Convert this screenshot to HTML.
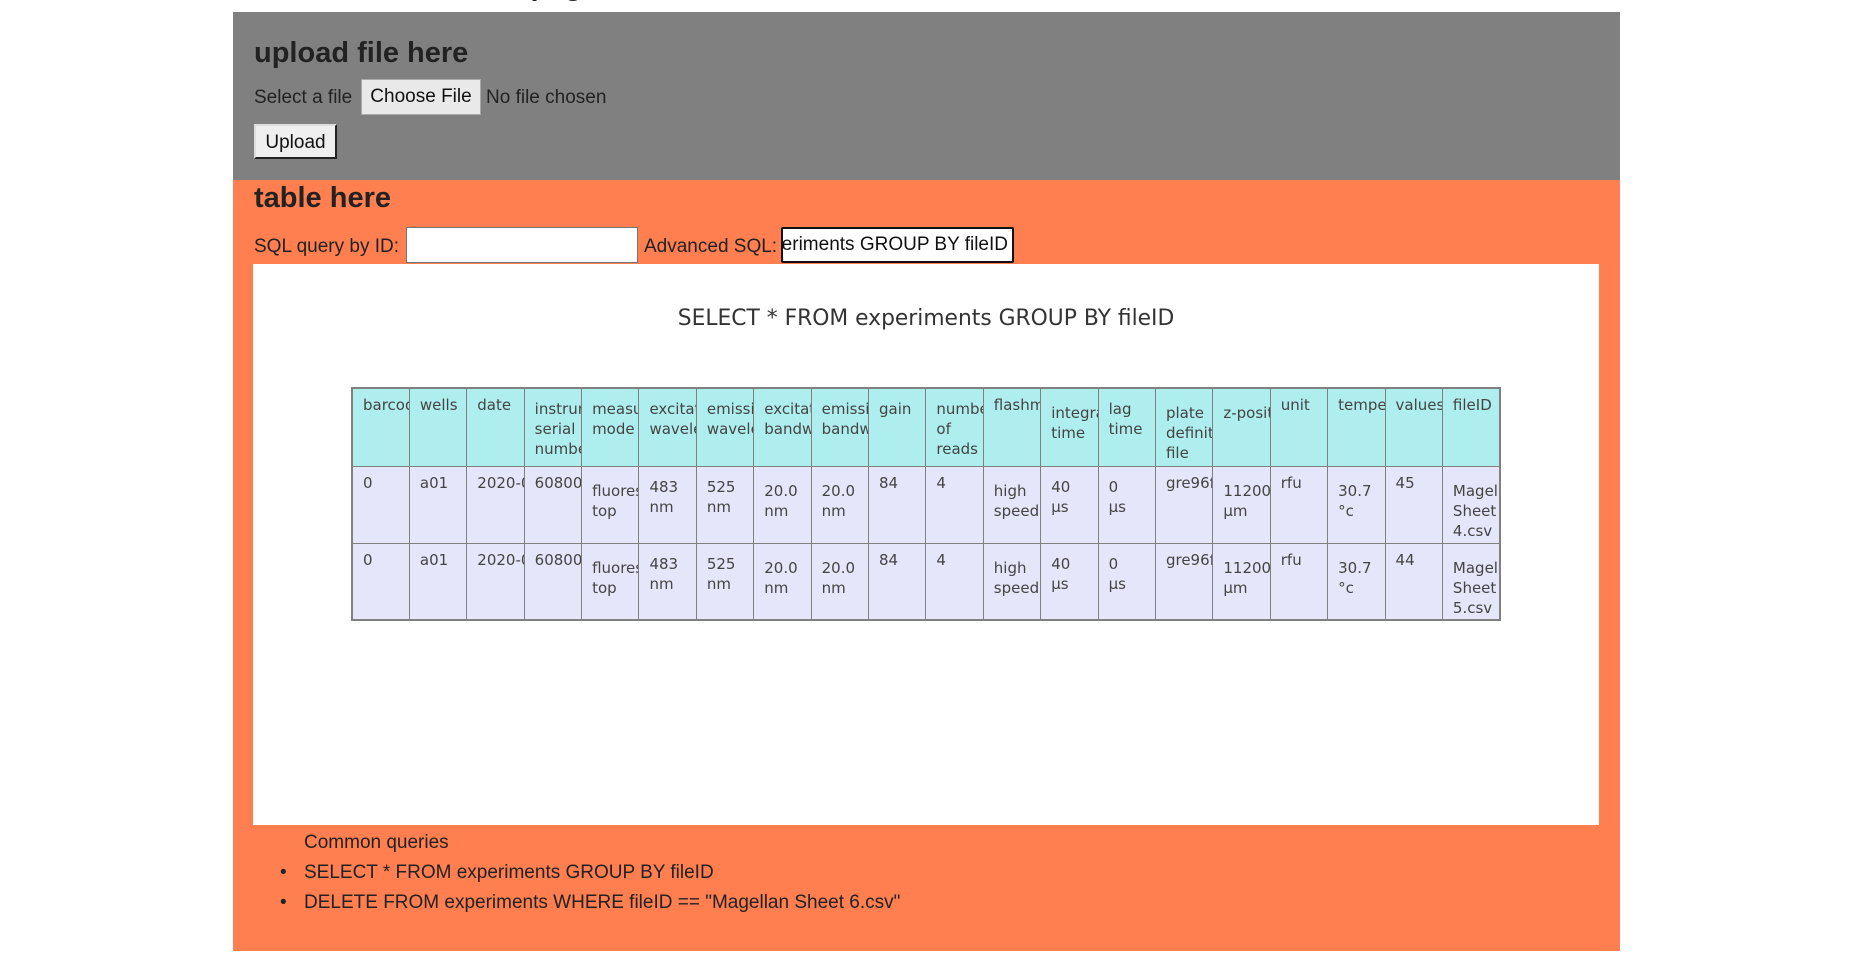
<!DOCTYPE html>
<html><head><meta charset="utf-8"><style>
body{margin:0;background:#fff;font-family:"Liberation Sans",sans-serif;color:#222;width:1870px;height:953px;overflow:hidden;position:relative}
.abs{position:absolute}
#gray{left:233px;top:12px;width:1387px;height:168px;background:#808080}
#orange{left:233px;top:180px;width:1387px;height:771px;background:#ff7f50}
h2{margin:0;font-size:29px;font-weight:bold;color:#222;position:absolute}
.t{font-size:19px;position:absolute;color:#222}
.btn{position:absolute;background:#efefef;border:1px solid #767676;font-size:19px;text-align:center;box-sizing:border-box;color:#111}
.inp{position:absolute;background:#fff;border:1px solid #767676;box-sizing:border-box;font-size:19px;overflow:hidden;white-space:nowrap}
#panel{left:253px;top:264px;width:1346px;height:561px;background:#fff}
table{position:absolute;left:351px;top:387px;border-collapse:collapse;table-layout:fixed;width:1148px;border:2px solid #808080;font-family:"DejaVu Sans",sans-serif;font-size:15px;color:#444}
td,th{width:57.4px;border:1px solid #808080;overflow:hidden;padding:6px 0 0 10px;vertical-align:top;text-align:left;font-weight:normal;line-height:20px;box-sizing:border-box;word-break:keep-all}
th{background:#afeeee;height:78px}
td{background:#e6e6fa;height:77px}
.m{padding-top:14px}
.s{padding-top:10px}
</style></head><body>
<div class="abs" style="left:400px;top:-30px;font-size:29px;font-weight:bold;color:#222">welcome page</div>
<div id="gray" class="abs"></div>
<div id="orange" class="abs"></div>
<h2 style="left:254px;top:37px">upload file here</h2>
<div class="t" style="left:254px;top:87px">Select a file</div>
<div class="btn" style="left:361px;top:79px;width:120px;height:36px;line-height:34px;border-color:#aaa;background:#e9e9e9">Choose File</div>
<div class="t" style="left:486px;top:87px">No file chosen</div>
<div class="btn" style="left:254px;top:124px;width:83px;height:35px;line-height:33px;border:2px solid #222;border-top-color:#ddd;border-left-color:#ddd">Upload</div>
<h2 style="left:254px;top:182px">table here</h2>
<div class="t" style="left:254px;top:236px">SQL query by ID:</div>
<div class="inp" style="left:406px;top:227px;width:232px;height:36px"></div>
<div class="t" style="left:644px;top:236px">Advanced SQL:</div>
<div class="inp" style="left:781px;top:227px;width:233px;height:36px;border:2px solid #111;border-radius:2px;line-height:32px;color:#111;direction:rtl;padding-right:4px">SELECT * FROM experiments GROUP BY fileID</div>
<div id="panel" class="abs"></div>
<div class="abs" style="left:253px;width:1346px;top:306px;text-align:center;font-family:'DejaVu Sans',sans-serif;font-size:21.8px;color:#333">SELECT * FROM experiments GROUP BY fileID</div>
<table>
<tr><th>barcode</th><th>wells</th><th>date</th><th class="s">instrument serial number</th><th class="s">measurement mode</th><th class="s">excitation wavelength</th><th class="s">emission wavelength</th><th class="s">excitation bandwidth</th><th class="s">emission bandwidth</th><th class="s">gain</th><th class="s">number of reads</th><th>flashmode</th><th class="m">integration time</th><th class="s">lag time</th><th class="m">plate definition file</th><th class="m">z‑position</th><th>unit</th><th>temperature</th><th>values</th><th>fileID</th></tr>
<tr><td>0</td><td>a01</td><td>2020‑06‑01</td><td>60800001</td><td class="m">fluorescence top</td><td class="s">483 nm</td><td class="s">525 nm</td><td class="m">20.0 nm</td><td class="m">20.0 nm</td><td>84</td><td>4</td><td class="m">high speed</td><td class="s">40<br>µs</td><td class="s">0<br>µs</td><td>gre96ft</td><td class="m">11200 µm</td><td>rfu</td><td class="m">30.7 °c</td><td>45</td><td class="m">Magellan Sheet 4.csv</td></tr>
<tr><td>0</td><td>a01</td><td>2020‑06‑01</td><td>60800001</td><td class="m">fluorescence top</td><td class="s">483 nm</td><td class="s">525 nm</td><td class="m">20.0 nm</td><td class="m">20.0 nm</td><td>84</td><td>4</td><td class="m">high speed</td><td class="s">40<br>µs</td><td class="s">0<br>µs</td><td>gre96ft</td><td class="m">11200 µm</td><td>rfu</td><td class="m">30.7 °c</td><td>44</td><td class="m">Magellan Sheet 5.csv</td></tr>
</table>
<div class="t" style="left:304px;top:832px">Common queries</div>
<div class="t" style="left:280px;top:862px">•</div>
<div class="t" style="left:304px;top:862px">SELECT * FROM experiments GROUP BY fileID</div>
<div class="t" style="left:280px;top:892px">•</div>
<div class="t" style="left:304px;top:892px">DELETE FROM experiments WHERE fileID == "Magellan Sheet 6.csv"</div>
</body></html>
